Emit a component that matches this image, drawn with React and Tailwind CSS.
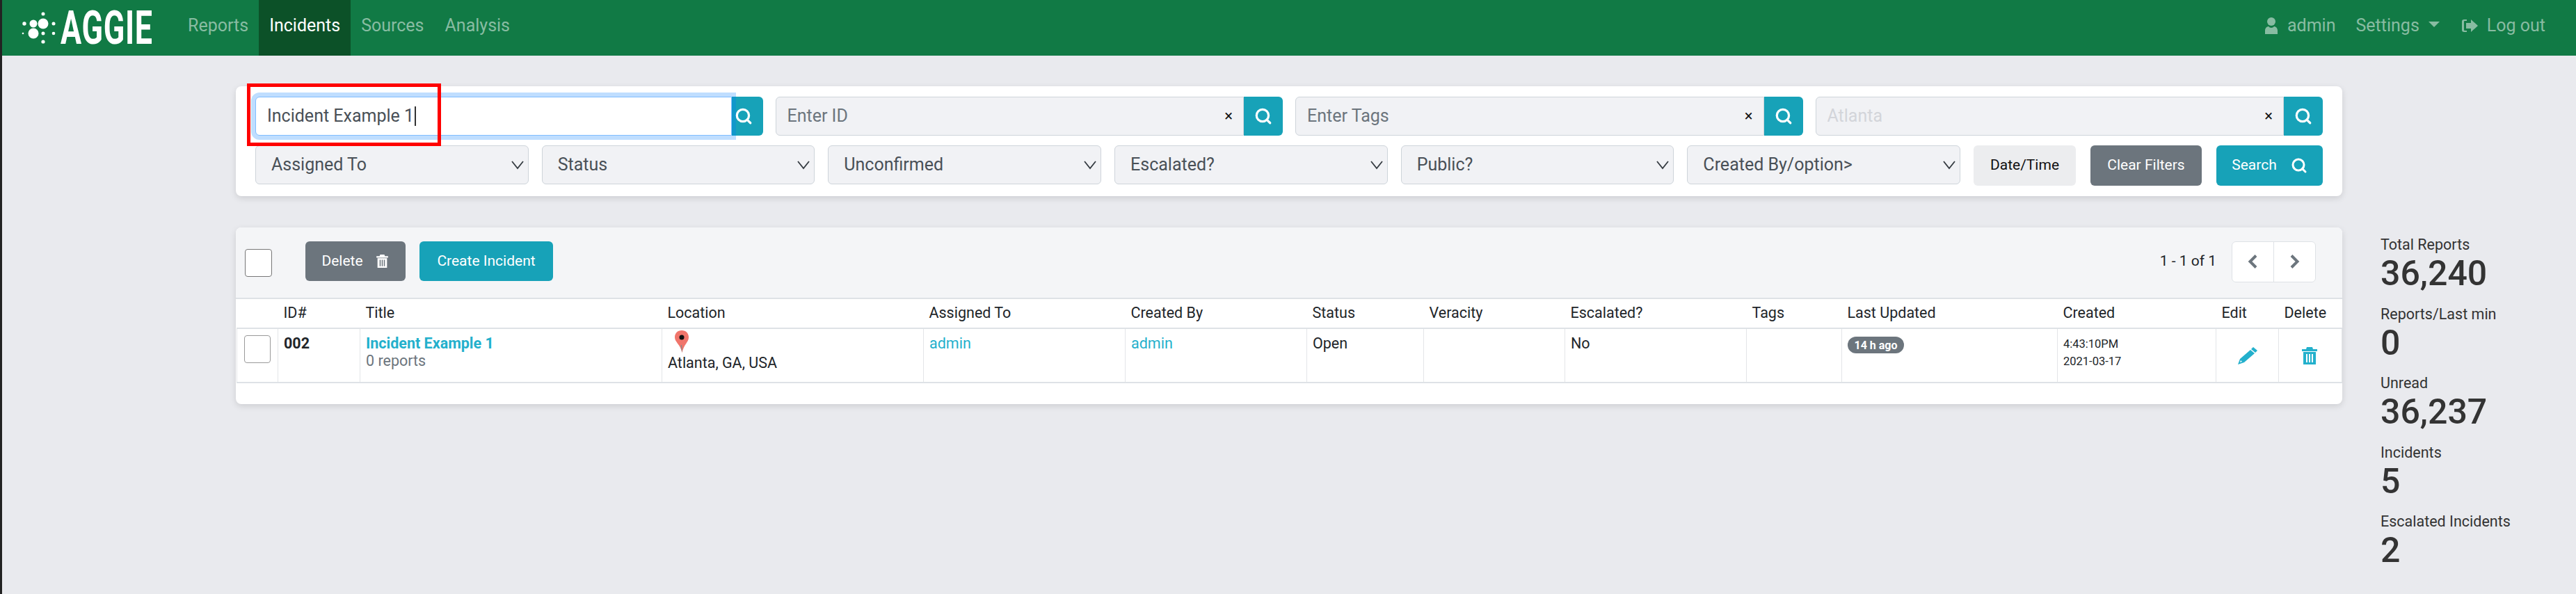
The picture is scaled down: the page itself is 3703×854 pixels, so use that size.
import React from 'react';
import { Search } from 'lucide-react';

const NAV = ['Reports', 'Incidents', 'Sources', 'Analysis'];
const SELECTS = ['Assigned To', 'Status', 'Unconfirmed', 'Escalated?', 'Public?', 'Created By/option>'];
const STATS = [
    ['Total Reports', '36,240'],
    ['Reports/Last min', '0'],
    ['Unread', '36,237'],
    ['Incidents', '5'],
    ['Escalated Incidents', '2'],
];
const COLUMNS = [
    ['', 'w-[59px]'],
    ['ID#', 'w-[118px]'],
    ['Title', 'w-[434px]'],
    ['Location', 'w-[376px]'],
    ['Assigned To', 'w-[290px]'],
    ['Created By', 'w-[261px]'],
    ['Status', 'w-[168px]'],
    ['Veracity', 'w-[203px]'],
    ['Escalated?', 'w-[261px]'],
    ['Tags', 'w-[137px]'],
    ['Last Updated', 'w-[310px]'],
    ['Created', 'w-[228px]'],
    ['Edit', 'w-[90px]'],
    ['Delete', 'w-[91px]'],
];

const Logo = () => (
    <svg width="50" height="46" viewBox="30 18 50 46" fill="#fff">
        <circle cx="48" cy="35" r="5.5" />
        <circle cx="62" cy="35" r="7.5" />
        <circle cx="48" cy="49" r="7.5" />
        <circle cx="62" cy="49" r="2.5" />
        <circle cx="62" cy="21" r="2.5" />
        <circle cx="35" cy="35" r="2.7" />
        <circle cx="77" cy="35" r="2.5" />
        <circle cx="33" cy="49" r="1.3" />
        <circle cx="77" cy="49" r="2.3" />
        <circle cx="62" cy="61" r="2.6" />
    </svg>
);

const UserIcon = () => (
    <svg width="18" height="24" viewBox="0 0 18 24" fill="currentColor">
        <circle cx="9" cy="6" r="6" />
        <path d="M0 24v-5c0-4 3-6 5-6 1 1 2.500 2 4 2s3-1 4-2c2 0 5 2 5 6v5z" />
    </svg>
);

const LogoutIcon = () => (
    <svg width="23" height="20" viewBox="0 0 23 20" fill="currentColor">
        <path d="M0 4a3 3 0 0 1 3-3h4v2H4a1 1 0 0 0-1 1v12a1 1 0 0 0 1 1h3v2H3a3 3 0 0 1-3-3z" />
        <path d="M6 6h7V1l10 9-10 9v-5H6z" />
    </svg>
);

const TrashIcon = ({ className }) => (
    <svg className={className} viewBox="0 0 22 25" fill="currentColor">
        <path d="M7 0h8l1 3h6v3H0V3h6z" />
        <path
            fillRule="evenodd"
            d="M2 7h18v18H2zM6 10v12h2V10zM10 10v12h2V10zM14 10v12h2V10z"
        />
    </svg>
);

const PencilIcon = () => (
    <svg width="28" height="25" viewBox="0 0 28 25" fill="currentColor">
        <path d="M22 0l6 5-3 3-6-5z" />
        <path fillRule="evenodd" d="M18 4l6 5L9 22 0 25l3-8zM4 19l-1 3 3-1z" />
    </svg>
);

const Pin = () => (
    <svg width="20" height="32" viewBox="0 0 20 32">
        <path d="M10 0c6 0 10 4 10 10 0 7-7 10-9.500 22C8 20 0 17 0 10 0 4 4 0 10 0z" fill="#f0756b" />
        <path d="M10 21c.500 3 .700 7 .500 11-1-4-1.500-8-2-11z" fill="#8a8a8a" />
        <circle cx="10" cy="10" r="3.500" fill="#111" />
    </svg>
);

const TextFilter = ({ placeholder, placeholderClass }) => (
    <div className="flex flex-1">
        <div className="flex h-14 min-w-0 flex-1 items-center rounded-l-md border border-[#ced4da] bg-[#f1f2f5] pr-[15px] pl-[16px]">
            <input
                placeholder={placeholder}
                className={`min-w-0 flex-1 bg-transparent text-[25px] outline-none ${placeholderClass}`}
            />
            <span className="text-[22px] leading-none text-[#111]">×</span>
        </div>
        <button className="flex h-14 w-[56px] flex-none items-center justify-center rounded-r-md bg-[#17a2b8] text-white">
            <Search size={26} strokeWidth={3} />
        </button>
    </div>
);

const SelectFilter = ({ label }) => (
    <div className="relative h-14 flex-1">
        <select className="h-full w-full appearance-none rounded-md border border-[#ced4da] bg-[#f1f2f5] pl-[22px] text-[25px] text-[#495057] outline-none">
            <option>{label}</option>
        </select>
        <svg className="pointer-events-none absolute top-[21px] right-[7px]" width="18" height="14" viewBox="0 0 18 14" fill="none" stroke="#343a40" strokeWidth="1.800">
            <path d="M1 2l8 10 8-10" />
        </svg>
    </div>
);

const App = () => {
    return (
        <div className="min-h-[854px] w-[3703px] border-l-[3px] border-[#222] bg-[#e9eaee] font-[Roboto,sans-serif] text-[#212529]">
            <header className="flex h-20 items-center bg-[#117a45] pr-[44px] pl-[27px] text-[25px] text-[#88bca2]">
                <Logo />
                <div className="ml-[7px] w-[132px] origin-left scale-x-[0.67] text-[67px] leading-none font-bold tracking-[1px] text-white">AGGIE</div>
                <nav className="ml-[36px] flex h-full">
                    {NAV.map((item) => (
                        <a
                            key={item}
                            className={`flex h-full items-center px-[15px] pb-[6px] ${item === 'Incidents' ? 'bg-[#0c5128] text-white' : ''}`}
                        >
                            {item}
                        </a>
                    ))}
                </nav>
                <div className="ml-auto flex items-center pb-[6px]">
                    <UserIcon />
                    <span className="ml-[14px]">admin</span>
                    <span className="ml-[29px]">Settings</span>
                    <span className="mt-[-4px] ml-[13px] h-0 w-0 border-x-[8px] border-t-[8px] border-x-transparent border-t-[#88bca2]" />
                    <span className="ml-[32px] flex"><LogoutIcon /></span>
                    <span className="ml-[13px]">Log out</span>
                </div>
            </header>

            <div className="flex pt-[44px] pl-[336px]">
                <main className="w-[3028px] flex-none">
                    <section className="flex flex-col gap-[14px] rounded-lg bg-white px-[28px] pt-[15px] pb-[15px] shadow-[0_3px_10px_rgba(0,0,0,0.12)]">
                        <div className="flex gap-[18px]">
                            <div className="relative flex flex-1">
                                <div className="relative z-10 flex h-14 min-w-0 flex-1 items-center rounded-l-md border border-[#80bdff] bg-white pl-[16px] shadow-[0_0_0_6px_rgba(0,123,255,0.25)]">
                                    <input
                                        defaultValue="Incident Example 1"
                                        className="w-[212px] bg-transparent text-[25px] text-[#495057] outline-none"
                                    />
                                    <span className="h-[28px] w-[1.500px] bg-[#333]" />
                                </div>
                                <button className="flex h-14 w-[45px] flex-none items-center justify-center rounded-r-md bg-[#17a2b8] pr-[10px] text-white">
                                    <Search size={26} strokeWidth={3} />
                                </button>
                                <div className="absolute top-[-19px] left-[-12px] z-20 h-[90px] w-[279px] border-[5px] border-[#f00]" />
                            </div>
                            <TextFilter placeholder="Enter ID" placeholderClass="placeholder:text-[#6c757d]" />
                            <TextFilter placeholder="Enter Tags" placeholderClass="placeholder:text-[#6c757d]" />
                            <TextFilter placeholder="Atlanta" placeholderClass="placeholder:text-[#d3d5da]" />
                        </div>
                        <div className="flex items-start">
                            <div className="flex flex-1 gap-[19px]">
                                {SELECTS.map((label) => (
                                    <SelectFilter key={label} label={label} />
                                ))}
                            </div>
                            <button className="ml-[19px] h-[58px] w-[147px] flex-none rounded-md bg-[#ecedef] text-[21px] text-[#111]">Date/Time</button>
                            <button className="ml-[21px] h-[58px] w-[160px] flex-none rounded-md bg-[#6c757d] text-[21px] text-white">Clear Filters</button>
                            <button className="ml-[21px] flex h-[58px] w-[153px] flex-none items-center justify-center gap-[20px] rounded-md bg-[#17a2b8] text-[21px] text-white">
                                Search
                                <Search size={24} strokeWidth={3} />
                            </button>
                        </div>
                    </section>

                    <section className="mt-[45px] h-[254px] overflow-hidden rounded-lg bg-white shadow-[0_3px_10px_rgba(0,0,0,0.12)]">
                        <div className="flex h-[103px] items-center border-b-2 border-[#dee2e6] bg-[#f4f5f7] pr-[38px] pl-[13px]">
                            <input type="checkbox" className="h-10 w-[39px] appearance-none rounded-[4px] border border-[#777] bg-white" />
                            <button className="mt-[-4px] ml-[48px] flex h-[57px] w-[144px] items-center justify-center gap-[19px] rounded-md bg-[#6c757d] pr-[2px] text-[21px] text-white">
                                Delete
                                <TrashIcon className="h-[19px] w-[17px]" />
                            </button>
                            <button className="mt-[-4px] ml-[20px] h-[57px] w-[192px] rounded-md bg-[#17a2b8] text-[21px] text-white">Create Incident</button>
                            <span className="mt-[-4px] ml-auto text-[21px]">1 - 1 of 1</span>
                            <div className="mt-[-3px] ml-[22px] flex h-[59px] w-[121px] rounded-md border border-[#dee2e6] bg-white text-[#6c757d]">
                                <button className="flex flex-1 items-center justify-center border-r border-[#dee2e6]">
                                    <svg width="15" height="20" viewBox="0 0 15 20" fill="none" stroke="currentColor" strokeWidth="4">
                                        <path d="M12 1.500L3.500 10l8.500 8.500" />
                                    </svg>
                                </button>
                                <button className="flex flex-1 items-center justify-center">
                                    <svg width="15" height="20" viewBox="0 0 15 20" fill="none" stroke="currentColor" strokeWidth="4">
                                        <path d="M3 1.500l8.500 8.500L3 18.500" />
                                    </svg>
                                </button>
                            </div>
                        </div>
                        <table className="ml-px w-[3026px] table-fixed border-collapse text-[21.500px]">
                            <colgroup>
                                {COLUMNS.map(([name, width]) => (
                                    <col key={name} className={width} />
                                ))}
                            </colgroup>
                            <thead>
                                <tr className="h-[42px] border-b-2 border-[#dee2e6]">
                                    {COLUMNS.map(([name]) => (
                                        <th key={name} className="px-[8px] text-left font-normal">{name}</th>
                                    ))}
                                </tr>
                            </thead>
                            <tbody>
                                <tr className="h-[78px] border-b-2 border-[#dee2e6] align-top [&>td]:border-x [&>td]:border-[#e3e5e8] [&>td]:px-[8px] [&>td]:pt-[8px] [&>td]:leading-[25px]">
                                    <td className="!px-0">
                                        <input type="checkbox" className="mt-[1px] ml-[10px] h-10 w-[38px] appearance-none rounded-[4px] border border-[#999] bg-white" />
                                    </td>
                                    <td className="font-bold">002</td>
                                    <td>
                                        <a className="block font-bold text-[#23b0cc]">Incident Example 1</a>
                                        <span className="text-[#6c757d]">0 reports</span>
                                    </td>
                                    <td className="!pt-[2px]">
                                        <div className="ml-[10px] h-[32px]"><Pin /></div>
                                        <div className="mt-[2px]">Atlanta, GA, USA</div>
                                    </td>
                                    <td><a className="text-[#23b0cc]">admin</a></td>
                                    <td><a className="text-[#23b0cc]">admin</a></td>
                                    <td>Open</td>
                                    <td />
                                    <td>No</td>
                                    <td />
                                    <td>
                                        <span className="mt-[3px] inline-flex h-[24px] w-[81px] items-center justify-center rounded-full bg-[#6c757d] text-[16px] font-bold text-white">14 h ago</span>
                                    </td>
                                    <td className="!pt-[9px] text-[16.500px]">
                                        <div>4:43:10PM</div>
                                        <div>2021-03-17</div>
                                    </td>
                                    <td className="!pt-[26px] text-[#23b0cc]">
                                        <div className="ml-[23px]"><PencilIcon /></div>
                                    </td>
                                    <td className="!pt-[26px] text-[#23b0cc]">
                                        <TrashIcon className="ml-[25px] h-[25px] w-[22px]" />
                                    </td>
                                </tr>
                            </tbody>
                        </table>
                    </section>
                </main>

                <aside className="mt-[214px] ml-[55px] text-[#333]">
                    {STATS.map(([label, value]) => (
                        <div key={label} className="h-[99.500px]">
                            <div className="text-[21.500px] leading-[28px]">{label}</div>
                            <div className="text-[50px] leading-[54px] font-medium">{value}</div>
                        </div>
                    ))}
                </aside>
            </div>
        </div>
    );
};

export default App;
